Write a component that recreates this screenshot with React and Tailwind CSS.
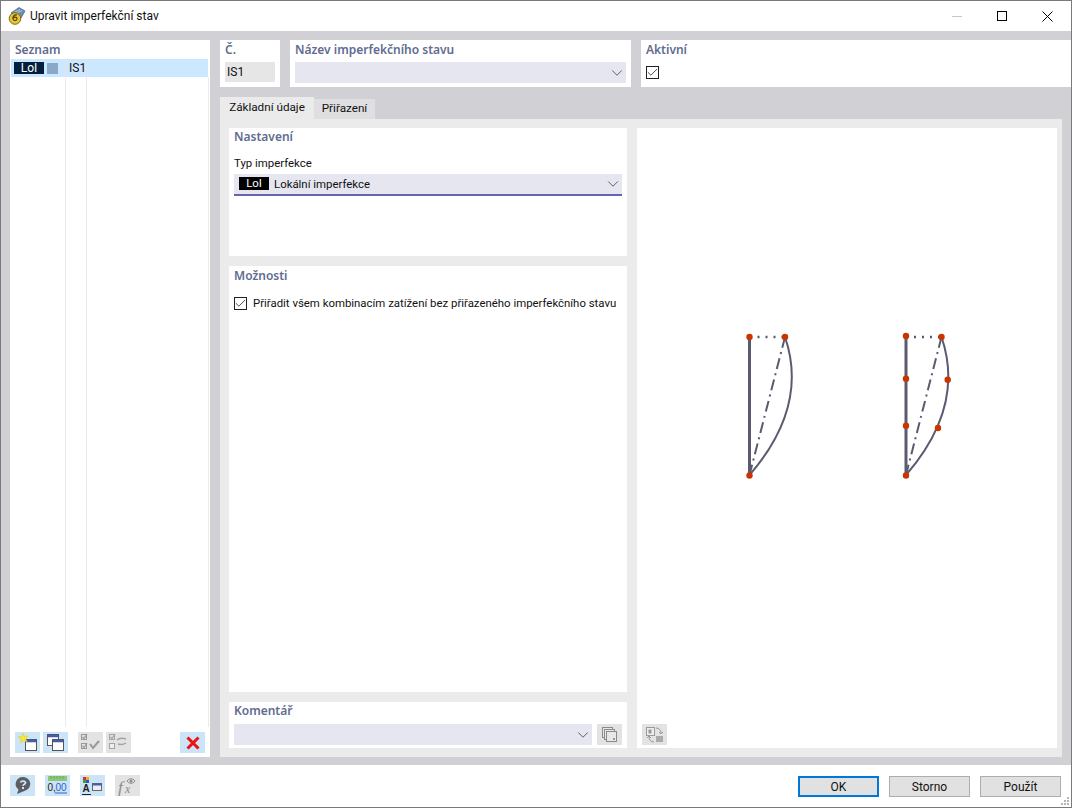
import React from "react";
import { ChevronDown, Check } from "lucide-react";

const SectionTitle = ({ children }) => (
  <div
    className="text-[12px] leading-[16px] font-semibold text-[#5f6c90]"
    style={{ fontFamily: '"Noto Sans", sans-serif' }}
  >
    {children}
  </div>
);

const IconButton = ({ active = true, children, className = "" }) => (
  <div
    className={`w-[25px] h-[21px] flex items-center justify-center shrink-0 ${
      active ? "bg-[#cce4f7]" : "bg-[#e3e3e3]"
    } ${className}`}
  >
    {children}
  </div>
);

const Combo = ({ children, className = "" }) => (
  <div className={`h-[21px] bg-[#e6e6f0] flex items-center justify-between ${className}`}>
    <div className="flex items-center">{children}</div>
    <ChevronDown size={18} strokeWidth={1} className="text-[#333]" />
  </div>
);

const Checkbox = ({ className = "" }) => (
  <div className={`w-[13px] h-[13px] border border-[#222] flex items-center justify-center shrink-0 ${className}`}>
    <Check size={13} strokeWidth={1.6} className="text-[#333] shrink-0" />
  </div>
);

const WindowIcon = ({ x, y }) => (
  <g>
    <rect x={x} y={y} width="11" height="11" fill="#fff" stroke="#555" />
    <rect x={x} y={y} width="11" height="2.5" fill="#3f5fc0" stroke="#555" strokeWidth="0.5" />
  </g>
);

const NewIcon = () => (
  <svg width="21" height="19" viewBox="0 0 21 19">
    <WindowIcon x={8.5} y={6.5} />
    <path d="M6 0l1.300 3.500 3.700-.6-2.400 2.800 1.600 3.300-3.600-1.400-3 2.200.5-3.700L1 4l3.600-.4z" fill="#f5e63a" stroke="#d8c820" strokeWidth="0.5" />
  </svg>
);

const CopyIcon = () => (
  <svg width="21" height="19" viewBox="0 0 21 19">
    <rect x="2.500" y="1.500" width="11" height="11" fill="#fff" stroke="#555" />
    <rect x="2.500" y="1.500" width="11" height="2.500" fill="#3f5fc0" stroke="#555" strokeWidth="0.5" />
    <WindowIcon x={7.5} y={6.5} />
  </svg>
);

const CheckAllIcon = () => (
  <svg width="21" height="19" viewBox="0 0 21 19" fill="none" stroke="#999">
    <rect x="1.500" y="1.500" width="5" height="5" />
    <rect x="1.500" y="10.500" width="5" height="5" />
    <path d="M2.500 4l1.500 1.500L7 1M2.500 13l1.500 1.500L7 10" strokeWidth="1.200" />
    <path d="M10 11l3 4 6-7" strokeWidth="2" />
  </svg>
);

const CheckSwapIcon = () => (
  <svg width="21" height="19" viewBox="0 0 21 19" fill="none" stroke="#a5a5a5">
    <rect x="1.500" y="1.500" width="5" height="5" />
    <rect x="1.500" y="10.500" width="5" height="5" fill="#eee" />
    <path d="M2.500 4l1.500 1.500L7 1" strokeWidth="1.200" />
    <path d="M9 7c3-3 6-2 9-1M18 10c-3 2-5 2-8 1" strokeWidth="1.500" />
  </svg>
);

const HelpIcon = () => (
  <svg width="21" height="19" viewBox="0 0 21 19">
    <path d="M11 1a7.500 7 0 0 1 2 13.700L5 18l1.500-4.500A7.500 7 0 0 1 11 1z" fill="#5d5d66" />
    <path d="M8.500 6.500c.5-2 5-2 5 .3 0 1.500-2.500 1.500-2.500 3.200" fill="none" stroke="#cce4f7" strokeWidth="1.700" />
    <rect x="10" y="11" width="2" height="2" fill="#cce4f7" />
  </svg>
);

const UnitsIcon = () => (
  <svg width="21" height="19" viewBox="0 0 21 19">
    <rect x="1" y="0" width="19" height="5" fill="#8cc77a" />
    <path d="M4 0v2.500M7 0v2.500M10 0v2.500M13 0v2.500M16 0v2.500" stroke="#5f9f50" strokeWidth="0.8" />
    <text x="0.500" y="15" fontSize="10" fontFamily="Liberation Sans" fill="#222">0,</text>
    <text x="8.500" y="15" fontSize="10" fontFamily="Liberation Sans" fill="#2f62c9">00</text>
    <path d="M8 17h12" stroke="#2f62c9" />
  </svg>
);

const StylesIcon = () => (
  <svg width="21" height="20" viewBox="0 0 21 20">
    <rect x="1" y="1" width="3" height="3" fill="#d0352b" />
    <rect x="4" y="1" width="3" height="3" fill="#e0b020" />
    <rect x="1" y="4" width="3" height="3" fill="#3f9f3f" />
    <rect x="4" y="4" width="3" height="3" fill="#3555c5" />
    <text x="0.500" y="16" fontSize="10" fontWeight="bold" fontFamily="Liberation Sans" fill="#222">A</text>
    <path d="M0 18.500h9" stroke="#222" />
    <rect x="10.500" y="7.500" width="9" height="7" fill="#eee" stroke="#666" />
    <rect x="10.500" y="7.500" width="9" height="2" fill="#4060b8" />
  </svg>
);

const FormulaIcon = () => (
  <svg width="21" height="20" viewBox="0 0 21 20" fill="none" stroke="#8b8b8b">
    <text x="1" y="17" fontSize="17" fontStyle="italic" fontFamily="Liberation Serif" fill="#8b8b8b" stroke="none">f</text>
    <text x="8" y="17" fontSize="12" fontStyle="italic" fontFamily="Liberation Serif" fill="#8b8b8b" stroke="none">x</text>
    <path d="M10 5c2-3 6-3 8 0-2 3-6 3-8 0z" />
    <circle cx="14" cy="5" r="1.500" fill="#8b8b8b" stroke="none" />
  </svg>
);

const StackIcon = () => (
  <svg width="17" height="17" viewBox="0 0 17 17" fill="#e8e8e8" stroke="#8b8b8b">
    <rect x="1.500" y="1.500" width="10" height="10" />
    <rect x="3.500" y="3.500" width="10" height="10" />
    <rect x="5.500" y="5.500" width="10" height="10" />
    <rect x="12" y="12" width="2" height="2" fill="#999" stroke="none" />
  </svg>
);

const SwapViewIcon = () => (
  <svg width="20" height="18" viewBox="0 0 20 18" fill="none" stroke="#9a9a9a">
    <rect x="1.500" y="1.500" width="8" height="8" fill="#eee" />
    <rect x="3.500" y="3.500" width="3" height="4" fill="#999" stroke="none" />
    <rect x="11" y="10" width="7" height="6" fill="#aaa" stroke="none" />
    <path d="M11 2c3 0 5 2 5 5M14 6l2 2 2-2M9 16c-3 0-5-2-5-5M2 12l2-2 2 2" />
  </svg>
);

const TitleIcon = () => (
  <svg width="18" height="18" viewBox="0 0 18 18">
    <path d="M3 6l8-5.500 6 3.500-4 7z" fill="#6f8fb0" stroke="#3f5f80" strokeWidth="0.7" />
    <path d="M5 6l7-3.500M7 7l7-3.500" stroke="#d8e4f0" strokeWidth="0.7" />
    <circle cx="7" cy="11.500" r="5.800" fill="#e8c52e" stroke="#6b5a18" strokeWidth="0.9" />
    <path d="M9 8c-3-.5-4.500 1.500-4 4 .4 2 4 2 4-.3 0-2-3-2-3.800-.5" fill="none" stroke="#4a3d10" strokeWidth="1.100" />
  </svg>
);

const Dot = ({ cx, cy }) => <circle cx={cx} cy={cy} r="3.200" fill="#c93400" stroke="none" />;

const Shape = ({ x, top = 337 }) => (
  <>
    <path d={`M${x} ${top}V475`} strokeWidth="3" />
    <path d={`M${x} 337H${x + 35.5}`} strokeWidth="2.500" strokeDasharray="2 6" />
    <path d={`M${x + 35.5} 337L${x} 475`} strokeWidth="2" strokeDasharray="11 4.500 2 4.500" />
    <path d={`M${x + 35.5} 337C${x + 47.5} 372 ${x + 47.5} 420 ${x} 475`} strokeWidth="2" />
  </>
);

const Diagram = () => (
  <svg width="220" height="160" viewBox="740 325 220 160" className="block ml-[103px]" fill="none" stroke="#5a5a70">
    <Shape x={749.5} />
    <Dot cx={749.5} cy={337} />
    <Dot cx={785} cy={337} />
    <Dot cx={749.5} cy={475.5} />

    <Shape x={906} top={336} />
    <Dot cx={906} cy={336} />
    <Dot cx={906} cy={378.7} />
    <Dot cx={906} cy={425.7} />
    <Dot cx={906} cy={475.5} />
    <Dot cx={941.5} cy={337} />
    <Dot cx={947.7} cy={379.7} />
    <Dot cx={938} cy={428} />
  </svg>
);

const FooterButton = ({ children, primary }) => (
  <div
    className={`w-[81px] h-[21px] flex items-center justify-center bg-[#e1e1e1] text-[#111] ${
      primary ? "border-2 border-[#0078d7]" : "border border-[#adadad]"
    }`}
  >
    {children}
  </div>
);

export default function App() {
  return (
    <div
      className="w-[1072px] h-[808px] flex flex-col bg-white border border-[#7a7a7a] overflow-hidden text-[12px] text-[#111]"
      style={{ fontFamily: "Roboto, sans-serif" }}
    >
      {/* title bar */}
      <div className="h-[30px] shrink-0 flex items-center pl-[7px]">
        <TitleIcon />
        <span className="ml-[4px]">Upravit imperfekční stav</span>
        <div className="ml-auto flex items-center">
          <div className="w-[10px] h-[1px] bg-[#c8c8c8] mr-[35px]" />
          <div className="w-[10px] h-[10px] border border-black mr-[35px]" />
          <svg width="11" height="11" viewBox="0 0 11 11" className="mr-[18px]" stroke="#000">
            <path d="M0.500 0.500l10 10M10.500 0.500l-10 10" />
          </svg>
        </div>
      </div>

      {/* body */}
      <div className="h-[734px] shrink-0 bg-[#d0d0d5] flex pt-[9px] pb-[8px] pl-[9px]">
        {/* list */}
        <div className="w-[200px] bg-white flex flex-col shrink-0">
          <div className="h-[19px] px-[5px] pt-[2px] shrink-0"><SectionTitle>Seznam</SectionTitle></div>
          <div className="h-[18px] ml-[1px] mr-[2px] bg-[#cce8ff] flex items-center shrink-0">
            <div className="w-[30px] h-[12px] ml-[3px] bg-[#021f3d] text-white flex items-center justify-center leading-none">LoI</div>
            <div className="w-[11px] h-[11px] ml-[3px] bg-[#8aa9c9]" />
            <div className="w-[21px] h-full ml-[7px] border-x border-[#e4e4e4] pl-[3px] flex items-center">IS1</div>
          </div>
          <div className="flex-1 flex mr-[1px] border-r border-[#ebebeb]">
            <div className="w-[56px] border-r border-[#ebebeb]" />
            <div className="w-[21px] border-r border-[#ebebeb]" />
          </div>
          <div className="h-[30px] shrink-0 flex items-start px-[5px] pt-[5px]">
            <IconButton><NewIcon /></IconButton>
            <IconButton className="ml-[3px]"><CopyIcon /></IconButton>
            <IconButton active={false} className="ml-[10px]"><CheckAllIcon /></IconButton>
            <IconButton active={false} className="ml-[3px]"><CheckSwapIcon /></IconButton>
            <IconButton className="ml-auto">
              <svg width="14" height="14" viewBox="0 0 14 14" stroke="#f01010" strokeWidth="3"><path d="M1.500 1.500l11 11M12.500 1.500l-11 11" /></svg>
            </IconButton>
          </div>
        </div>

        {/* right side */}
        <div className="flex-1 flex flex-col ml-[10px] min-w-0">
          <div className="h-[47px] flex gap-[10px] shrink-0">
            <div className="w-[60px] bg-white px-[5px] pt-[2px]">
              <SectionTitle>Č.</SectionTitle>
              <div className="mt-[4px] h-[20px] w-[50px] bg-[#e6e6e6] flex items-center pl-[2px]">IS1</div>
            </div>
            <div className="w-[341px] bg-white px-[5px] pt-[2px]">
              <SectionTitle>Název imperfekčního stavu</SectionTitle>
              <Combo className="mt-[4px]" />
            </div>
            <div className="flex-1 bg-white px-[5px] pt-[2px]">
              <SectionTitle>Aktivní</SectionTitle>
              <Checkbox className="mt-[8px]" />
            </div>
          </div>

          {/* tabs */}
          <div className="h-[22px] mt-[10px] flex items-end shrink-0 text-[11.7px]">
            <div className="h-[22px] w-[94px] bg-[#ebebeb] flex items-center justify-center">Základní údaje</div>
            <div className="h-[20px] w-[61px] bg-[#dfdfe1] flex items-center justify-center">Přiřazení</div>
          </div>

          {/* tab content */}
          <div className="w-[842px] flex-1 bg-[#ebebeb] flex gap-[10px] pl-[9px] pr-[5px] pt-[9px] pb-[9px] min-h-0 text-[11.4px]">
            <div className="w-[398px] flex flex-col gap-[10px]">
              <div className="h-[128px] bg-white px-[5px] pt-[1px] shrink-0">
                <SectionTitle>Nastavení</SectionTitle>
                <div className="mt-[10px] leading-[16px]">Typ imperfekce</div>
                <Combo className="mt-[3px] h-[22px] border-b-2 border-[#6464b0]">
                  <div className="w-[30px] h-[13px] ml-[5px] bg-black text-white flex items-center justify-center leading-none">LoI</div>
                  <span className="ml-[5px] mt-[1px]">Lokální imperfekce</span>
                </Combo>
              </div>
              <div className="flex-1 bg-white px-[5px] pt-[2px]">
                <SectionTitle>Možnosti</SectionTitle>
                <div className="mt-[11px] flex items-center">
                  <Checkbox />
                  <span className="ml-[6px] whitespace-nowrap">Přiřadit všem kombinacím zatížení bez přiřazeného imperfekčního stavu</span>
                </div>
              </div>
              <div className="h-[46px] bg-white px-[5px] pt-[1px] shrink-0">
                <SectionTitle>Komentář</SectionTitle>
                <div className="mt-[5px] flex items-center gap-[5px]">
                  <Combo className="flex-1" />
                  <IconButton active={false}><StackIcon /></IconButton>
                </div>
              </div>
            </div>

            {/* preview */}
            <div className="w-[420px] bg-white flex flex-col">
              <div className="mt-[197px]"><Diagram /></div>
              <IconButton active={false} className="mt-auto ml-[5px] mb-[3px]"><SwapViewIcon /></IconButton>
            </div>
          </div>
        </div>
      </div>

      {/* footer */}
      <div className="relative flex-1 flex items-start pl-[9px] pr-[10px] pt-[10px]">
        <IconButton><HelpIcon /></IconButton>
        <IconButton className="ml-[10px]"><UnitsIcon /></IconButton>
        <IconButton className="ml-[10px]"><StylesIcon /></IconButton>
        <IconButton active={false} className="ml-[10px]"><FormulaIcon /></IconButton>
        <div className="ml-auto mt-[1px] flex gap-[10px]">
          <FooterButton primary>OK</FooterButton>
          <FooterButton>Storno</FooterButton>
          <FooterButton>Použít</FooterButton>
        </div>
        <svg width="9" height="9" viewBox="0 0 9 9" fill="#b5b5b5" className="absolute right-[1px] bottom-[1px]">
          <rect x="6" y="0" width="2" height="2" />
          <rect x="3" y="3" width="2" height="2" />
          <rect x="6" y="3" width="2" height="2" />
          <rect x="0" y="6" width="2" height="2" />
          <rect x="3" y="6" width="2" height="2" />
          <rect x="6" y="6" width="2" height="2" />
        </svg>
      </div>
    </div>
  );
}
